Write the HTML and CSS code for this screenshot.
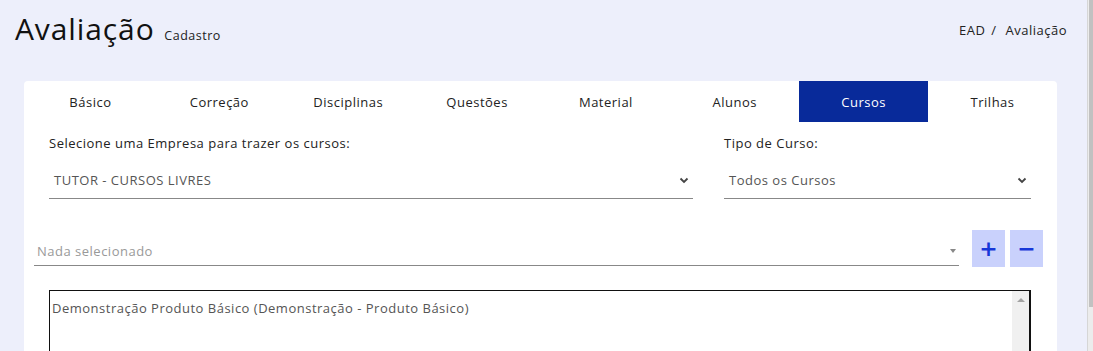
FILE: index.html
```html
<!DOCTYPE html>
<html>
<head>
	<title>Avaliação - Cadastro</title>
	<link rel="stylesheet" href="styles.css">
</head>
<body>
	<div class="header">
		<h1>Avaliação <small>Cadastro</small></h1>
		<div class="breadcrumb">EAD <span class="sep">/</span> Avaliação</div>
	</div>

	<div class="card">
		<div class="tabs">
			<div class="tab">Básico</div>
			<div class="tab">Correção</div>
			<div class="tab">Disciplinas</div>
			<div class="tab">Questões</div>
			<div class="tab">Material</div>
			<div class="tab">Alunos</div>
			<div class="tab active">Cursos</div>
			<div class="tab">Trilhas</div>
		</div>

		<div class="content">
			<div class="filters">
				<div class="field">
					<label>Selecione uma Empresa para trazer os cursos:</label>
					<div class="select">
						<span>TUTOR - CURSOS LIVRES</span>
						<svg width="10" height="7" viewBox="0 0 10 7"><path d="M1.5 1.5l3.5 3.5 3.5-3.5" fill="none" stroke="#444" stroke-width="1.8"/></svg>
					</div>
				</div>
				<div class="field">
					<label>Tipo de Curso:</label>
					<div class="select">
						<span>Todos os Cursos</span>
						<svg width="10" height="7" viewBox="0 0 10 7"><path d="M1.5 1.5l3.5 3.5 3.5-3.5" fill="none" stroke="#444" stroke-width="1.8"/></svg>
					</div>
				</div>
			</div>

			<div class="picker">
				<div class="picker-select">
					<span>Nada selecionado</span>
					<i class="caret"></i>
				</div>
				<button class="square">+</button>
				<button class="square">&minus;</button>
			</div>

			<div class="listbox">
				<div class="option">Demonstração Produto Básico (Demonstração - Produto Básico)</div>
				<div class="list-scroll"><i class="up"></i></div>
			</div>
		</div>
	</div>

	<div class="page-scroll"><div class="thumb"></div></div>
</body>
</html>
```

FILE: styles.css
```css
*{
	padding: 0px;
	margin: 0px;
	box-sizing: border-box;
}
body{
	background: #edeffb;
	font-family: "Open Sans", sans-serif;
	font-size: 13px;
	letter-spacing: 0.5px;
	color: #222;
	height: 351px;
	overflow: hidden;
}
/* fake page scrollbar */
.page-scroll{
	position: fixed;
	top: 0;
	right: 0;
	width: 6px;
	height: 100%;
	background: #ececec;
	border-left: 1px solid #d6d6d6;
}
.thumb{
	height: 307px;
	margin-left: 1px;
	background: #c1c1c1;
}
.header{
	display: flex;
	justify-content: space-between;
	align-items: flex-start;
	padding: 8px 26px 0 15px;
	height: 81px;
}
h1{
	font-size: 30px;
	font-weight: 400;
	color: #111;
	letter-spacing: 0.9px;
}
h1 small{
	font-size: 12.5px;
	color: #222;
	letter-spacing: 0.5px;
	margin-left: 1px;
}
.breadcrumb{
	margin-top: 13px;
	font-size: 13px;
	color: #222;
}
.sep{
	margin: 0 5px 0 2px;
}
.card{
	background: #fff;
	margin: 0 36px 0 24px;
	border-radius: 4px 4px 0 0;
	height: 300px;
}
.tabs{
	display: grid;
	grid-template-columns: repeat(8, 1fr);
	height: 41px;
	padding-left: 2px;
}
.tab{
	display: flex;
	align-items: center;
	justify-content: center;
	color: #222;
}
.tab.active{
	background: #082a9a;
	color: #fff;
}
.content{
	padding: 11px 26px 0 25px;
}
.filters{
	display: grid;
	grid-template-columns: 1fr 307px;
	gap: 31px;
}
.field label{
	display: block;
	line-height: 20px;
	color: #222;
}
.select{
	display: flex;
	justify-content: space-between;
	align-items: center;
	height: 46px;
	padding: 9px 4px 0 5px;
	border-bottom: 1px solid #888;
	color: #555;
}
.picker{
	display: flex;
	align-items: flex-start;
	margin: 31px -12px 0 -15px;
}
.picker-select{
	flex: 1;
	display: flex;
	justify-content: space-between;
	align-items: center;
	height: 36px;
	padding: 7px 3px 0 3px;
	border-bottom: 1px solid #888;
	color: #999;
	margin-right: 13px;
}
.caret{
	border: 3px solid transparent;
	border-top: 4px solid #888;
	margin-top: 3px;
}
.square{
	width: 33px;
	height: 37px;
	border: none;
	background: #c9d1fc;
	color: #1737d8;
	font-family: "DejaVu Sans", sans-serif;
	font-size: 22px;
	font-weight: bold;
	margin-right: 5px;
}
.square:last-child{
	margin-right: 0;
}
.listbox{
	display: flex;
	justify-content: space-between;
	margin-top: 23px;
	height: 90px;
	border: 1px solid #111;
	border-right-width: 2px;
	border-bottom: none;
	color: #555;
}
.option{
	padding: 8px 2px;
}
.list-scroll{
	width: 17px;
	background: #f0f0f0;
	display: flex;
	justify-content: center;
	padding-top: 7px;
}
.up{
	width: 0;
	height: 0;
	border: 4px solid transparent;
	border-top: none;
	border-bottom: 4px solid #a3a3a3;
}
```
